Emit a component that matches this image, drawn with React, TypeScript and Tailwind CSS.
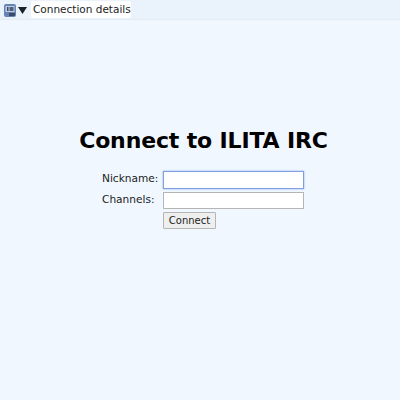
export default function App() {
  return (
    <div className="h-[400px] w-[400px] overflow-hidden bg-[#f0f7ff] font-['DejaVu_Sans',sans-serif] text-[#222]">
      <div className="flex h-5 items-center border-b border-[#e3ecf5] bg-[#eaf2fb] pl-[4px]">
        <svg width="12" height="13" viewBox="0 0 12 13" className="mt-[2px] shrink-0">
          <rect x="0" y="0" width="12" height="13" rx="2" fill="#6583b3" />
          <rect x="1.5" y="2" width="9" height="6" fill="#c0cbdf" />
          <rect x="3" y="3" width="1.5" height="4" fill="#3a4a66" />
          <rect x="5.5" y="3" width="4" height="4" fill="#4d6080" />
          <rect x="5" y="9" width="6" height="3" fill="#3a4a66" />
        </svg>
        <svg width="9" height="7" viewBox="0 0 9 7" className="mt-[2px] ml-[2px] shrink-0">
          <path d="M0 0H9L4.5 7Z" fill="#1a2028" />
        </svg>
        <div className="ml-[4px] flex h-[17px] w-[100px] items-center rounded-[2px] bg-white pl-[2px] text-[10.5px] leading-none text-[#222]">
          Connection details
        </div>
      </div>
      <h1 className="mt-[108px] pl-[7px] text-center text-[22px] leading-[26px] font-bold tracking-[-0.15px] text-black">Connect to ILITA IRC</h1>
      <div className="mt-[17px] ml-[102px] grid grid-cols-[61px_141px] gap-y-[3px] text-[10.6px]">
        <label className="flex h-[18px] items-center pb-[2px]">Nickname:</label>
        <input className="h-[18px] border border-[#7f9fe0] bg-white shadow-[0_0_2px_#8fb0f0] outline-none" />
        <label className="flex h-[17px] items-center pb-[2px]">Channels:</label>
        <input className="h-[17px] border border-[#b5b5b5] bg-white outline-none" />
        <div />
        <button className="h-[17px] w-[53px] rounded-[1px] border border-[#b5b5b5] bg-[#efefef] text-[10px] leading-none text-[#222]">Connect</button>
      </div>
    </div>
  );
}
